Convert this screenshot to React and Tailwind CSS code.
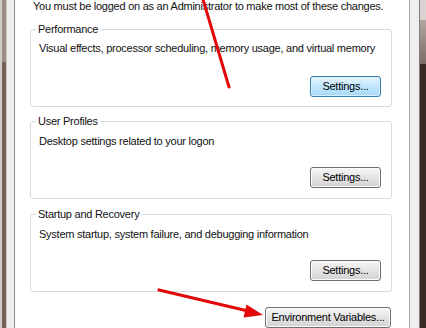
import React from "react";

function Btn({ children, primary, className = "" }) {
  const base =
    "h-[21px] rounded-[3px] border text-[11px] leading-[19px] text-black flex items-center justify-center ";
  const look = primary
    ? "border-[#3c7fb1] bg-linear-to-b from-[#eaf6fd] via-[#bee6fd] to-[#a7d9f5] shadow-[inset_0_0_0_1px_#d6eefc]"
    : "border-[#707070] bg-linear-to-b from-[#f6f6f6] via-[#e4e4e4] to-[#d2d2d2] shadow-[inset_0_0_0_1px_#fbfbfb]";
  return <div className={base + look + " " + className}>{children}</div>;
}

function Group({ title, desc, primary, className, descMt, btnMt, pb }) {
  return (
    <fieldset
      className={
        "border border-[#d6dbe0] rounded-[3px] px-0 m-0 w-[362px] min-w-0 " +
        className +
        " " +
        pb
      }
    >
      <legend className="ml-[5px] px-[2px] h-[14px] leading-[14px]">{title}</legend>
      <div className={"pl-[8px] leading-[12px] h-[12px] whitespace-nowrap " + descMt}>
        {desc}
      </div>
      <div className={"flex justify-end pr-[10px] " + btnMt}>
        <Btn primary={primary} className="w-[71px]">
          Settings...
        </Btn>
      </div>
    </fieldset>
  );
}

export default function App() {
  return (
    <div className="relative w-[426px] h-[328px] overflow-hidden flex bg-white text-[11px] tracking-[-0.25px] text-[#111] font-['Liberation_Sans',Arial,sans-serif]">
      {/* left window edge */}
      <div className="flex h-full shrink-0">
        <div className="w-[2px] bg-[#d3cbc6]" />
        <div className="w-[4px] flex flex-col">
          <div className="h-[62px] bg-[#9c8d87]" />
          <div className="flex-1 bg-[#76625b]" />
        </div>
        <div className="w-[1px] bg-[#cfc6c1]" />
        <div className="w-[7px] bg-[#eeeeee]" />
        <div className="w-[1px] bg-[#8c8c8c]" />
      </div>

      {/* dialog content */}
      <div className="w-[394px] shrink-0 flex flex-col pl-[15px]">
        <div className="h-[22px] pl-[3px] leading-[12px] whitespace-nowrap">
          You must be logged on as an Administrator to make most of these changes.
        </div>
        <Group
          title="Performance"
          desc="Visual effects, processor scheduling, memory usage, and virtual memory"
          primary
          className="mt-0"
          descMt="mt-[6px]"
          btnMt="mt-[22px]"
          pb="pb-[9px]"
        />
        <Group
          title="User Profiles"
          desc="Desktop settings related to your logon"
          className="mt-[7px]"
          descMt="mt-[7px]"
          btnMt="mt-[20px]"
          pb="pb-[10px]"
        />
        <Group
          title="Startup and Recovery"
          desc="System startup, system failure, and debugging information"
          className="mt-[8px]"
          descMt="mt-[7px]"
          btnMt="mt-[20px]"
          pb="pb-[10px]"
        />
        <div className="flex justify-end pr-[18px] mt-[15px]">
          <Btn className="w-[126px]">Environment Variables...</Btn>
        </div>
      </div>

      {/* right window edge */}
      <div className="flex h-full shrink-0">
        <div className="w-[1px] bg-[#a8a8a8]" />
        <div className="w-[9px] bg-[#efefef]" />
        <div className="w-[1px] bg-[#7d7d7d]" />
        <div className="w-[6px] flex flex-col">
          <div className="h-[20px] bg-[#d9d3d1]" />
          <div className="h-[44px] bg-linear-to-b from-[#b2a6a3] to-[#7d6c68]" />
          <div className="flex-1 bg-[#3b2b27]" />
        </div>
      </div>

      {/* red annotation arrows */}
      <svg
        className="absolute inset-0 pointer-events-none"
        width="426"
        height="328"
        viewBox="0 0 426 328"
      >
        <line x1="202" y1="-4" x2="229" y2="87" stroke="#e3090b" strokeWidth="3" strokeLinecap="round" />
        <line x1="159" y1="290" x2="248" y2="311" stroke="#e3090b" strokeWidth="3.2" strokeLinecap="round" />
        <polygon points="263,315 246.5,304.5 243.5,317.5" fill="#e3090b" />
      </svg>
    </div>
  );
}
